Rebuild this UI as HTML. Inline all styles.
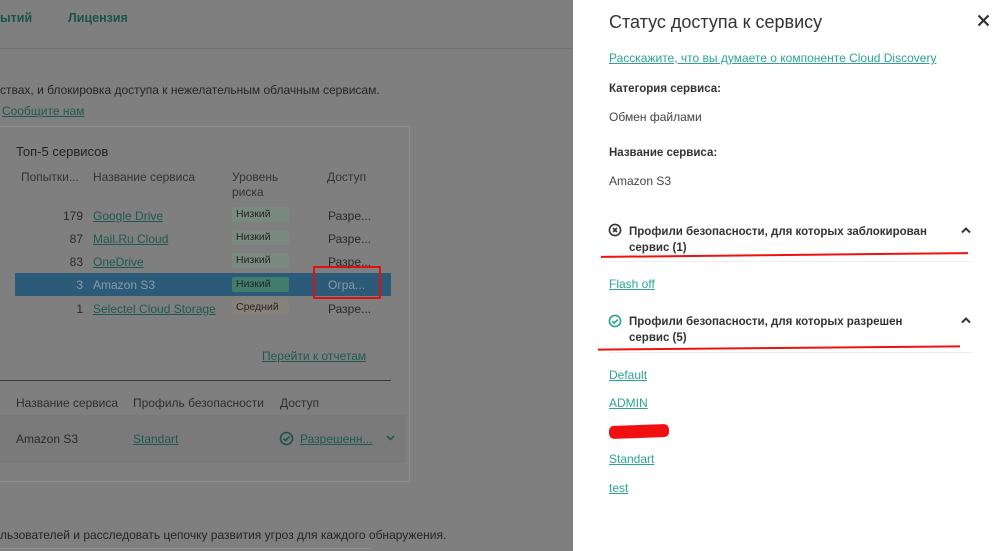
<!DOCTYPE html>
<html><head><meta charset="utf-8"><style>
*{margin:0;padding:0;box-sizing:border-box}
body{width:1000px;height:551px;overflow:hidden;position:relative;background:#7f7f7f;font-family:"Liberation Sans",sans-serif;font-size:12px;color:#2a2a2a}
.a{position:absolute;white-space:nowrap}
.dl{color:#1f5a50;text-decoration:underline}
.tag{position:absolute;width:57px;height:15px;font-size:10.5px;line-height:15px;padding:0 4px;background:#7a8a80;color:#262626;border-radius:2px}
#p{position:absolute;left:573px;top:0;width:427px;height:551px;background:#fff}
.pl{color:#2aa491;text-decoration:underline}
.b{font-weight:bold;color:#333}
</style></head><body>
<div class="a" style="left:0;top:11px;font-weight:bold;color:#1c5349;font-size:12.5px">ытий</div>
<div class="a" style="left:68px;top:11px;font-weight:bold;color:#1c5349;font-size:12.5px">Лицензия</div>
<div class="a" style="left:0;top:48px;width:573px;height:1px;background:#727272"></div>
<div class="a" style="left:0;top:83px;color:#252525">ствах, и блокировка доступа к нежелательным облачным сервисам.</div>
<div class="a dl" style="left:2px;top:104px">Сообщите нам</div>
<div class="a" style="left:-1px;top:126px;width:411px;height:356px;border:1px solid #8c8c8c;background:#7f7f7f"></div>
<div class="a" style="left:16px;top:144px;font-size:13px;color:#222">Топ-5 сервисов</div>
<div class="a" style="left:21px;top:170px;color:#333">Попытки...</div>
<div class="a" style="left:93px;top:170px;color:#333">Название сервиса</div>
<div class="a" style="left:232px;top:170px;color:#333;line-height:15px">Уровень<br>риска</div>
<div class="a" style="left:327px;top:170px;color:#333">Доступ</div>
<div class="a" style="left:15px;top:273px;width:376px;height:23px;background:#2b5b78"></div>
<div class="a" style="left:313px;top:266px;width:68px;height:33px;border:2px solid #e01010"></div>
<div class="a" style="left:40px;top:209px;width:43px;text-align:right">179</div><div class="a dl" style="left:93px;top:209px">Google Drive</div><div class="tag" style="left:232px;top:207px">Низкий</div><div class="a" style="left:328px;top:209px">Разре...</div>
<div class="a" style="left:40px;top:232px;width:43px;text-align:right">87</div><div class="a dl" style="left:93px;top:232px">Mail.Ru Cloud</div><div class="tag" style="left:232px;top:230px">Низкий</div><div class="a" style="left:328px;top:232px">Разре...</div>
<div class="a" style="left:40px;top:255px;width:43px;text-align:right">83</div><div class="a dl" style="left:93px;top:255px">OneDrive</div><div class="tag" style="left:232px;top:253px">Низкий</div><div class="a" style="left:328px;top:255px">Разре...</div>
<div class="a" style="left:40px;top:278px;width:43px;text-align:right;color:#8a9aa5">3</div><div class="a" style="left:93px;top:278px;color:#8a9aa5">Amazon S3</div><div class="tag" style="left:232px;top:277px;background:#417c6d">Низкий</div><div class="a" style="left:328px;top:278px;color:#8a9aa5">Огра...</div>
<div class="a" style="left:40px;top:302px;width:43px;text-align:right">1</div><div class="a dl" style="left:93px;top:302px">Selectel Cloud Storage</div><div class="tag" style="left:232px;top:300px;background:#86827a">Средний</div><div class="a" style="left:328px;top:302px">Разре...</div>
<div class="a dl" style="left:262px;top:349px">Перейти к отчетам</div>
<div class="a" style="left:0;top:380px;width:391px;height:1px;background:#3a3a3a"></div>
<div class="a" style="left:16px;top:396px;color:#2e2e2e">Название сервиса</div>
<div class="a" style="left:133px;top:396px;color:#2e2e2e">Профиль безопасности</div>
<div class="a" style="left:280px;top:396px;color:#2e2e2e">Доступ</div>
<div class="a" style="left:0;top:415px;width:405px;height:48px;background:#7a7a7a"></div>
<div class="a" style="left:16px;top:432px">Amazon S3</div>
<div class="a dl" style="left:133px;top:432px">Standart</div>
<svg class="a" style="left:279px;top:431px" width="15" height="15" viewBox="0 0 15 15"><circle cx="7.5" cy="7.5" r="6" fill="none" stroke="#1c5349" stroke-width="1.6"/><path d="M4.5 7.6l2 2 4-4" fill="none" stroke="#1c5349" stroke-width="1.6"/></svg>
<div class="a dl" style="left:300px;top:432px">Разрешенн...</div>
<svg class="a" style="left:386px;top:435px" width="9" height="6" viewBox="0 0 9 6"><path d="M1 1l3.5 3.5L8 1" fill="none" stroke="#1c5349" stroke-width="1.5"/></svg>
<div class="a" style="left:0;top:528px;color:#252525">льзователей и расследовать цепочку развития угроз для каждого обнаружения.</div>
<div class="a" style="left:0;top:548px;width:372px;height:1px;background:#8c8c8c"></div>
<div id="p">
<div class="a" style="left:36px;top:12px;font-size:18px;color:#333">Статус доступа к сервису</div>
<svg class="a" style="left:404px;top:14px" width="13" height="13" viewBox="0 0 13 13"><path d="M1.5 1.5l10 10M11.5 1.5l-10 10" stroke="#333" stroke-width="2.2"/></svg>
<div class="a pl" style="left:36px;top:51px">Расскажите, что вы думаете о компоненте Cloud Discovery</div>
<div class="a b" style="left:36px;top:83px;font-size:11.5px">Категория сервиса:</div>
<div class="a" style="left:36px;top:110px;color:#444">Обмен файлами</div>
<div class="a b" style="left:36px;top:147px;font-size:11.5px">Название сервиса:</div>
<div class="a" style="left:36px;top:174px;color:#444">Amazon S3</div>
<svg class="a" style="left:35px;top:223px" width="14" height="14" viewBox="0 0 14 14"><circle cx="7" cy="7" r="5.6" fill="none" stroke="#333" stroke-width="1.6"/><path d="M5 5l4 4M9 5l-4 4" stroke="#333" stroke-width="1.6"/></svg>
<div class="a b" style="left:56px;top:224px;font-size:11.5px;line-height:16px">Профили безопасности, для которых заблокирован<br>сервис (1)</div>
<svg class="a" style="left:388px;top:227px" width="10" height="7" viewBox="0 0 10 7"><path d="M1 5.5L5 1.5l4 4" fill="none" stroke="#333" stroke-width="2"/></svg>
<div class="a" style="left:28px;top:254px;width:367px;height:2px;background:#f01010;transform:rotate(-0.6deg)"></div>
<div class="a" style="left:36px;top:261px;width:364px;height:1px;background:#eee"></div>
<div class="a pl" style="left:36px;top:277px">Flash off </div>
<svg class="a" style="left:35px;top:314px" width="14" height="14" viewBox="0 0 14 14"><circle cx="7" cy="7" r="5.6" fill="none" stroke="#2aa491" stroke-width="1.6"/><path d="M4.3 7.2l1.9 1.9 3.6-3.6" fill="none" stroke="#2aa491" stroke-width="1.6"/></svg>
<div class="a b" style="left:56px;top:314px;font-size:11.5px;line-height:16px">Профили безопасности, для которых разрешен<br>сервис (5)</div>
<svg class="a" style="left:388px;top:317px" width="10" height="7" viewBox="0 0 10 7"><path d="M1 5.5L5 1.5l4 4" fill="none" stroke="#333" stroke-width="2"/></svg>
<div class="a" style="left:25px;top:347px;width:362px;height:2px;background:#f01010;transform:rotate(-0.5deg)"></div>
<div class="a" style="left:36px;top:352px;width:364px;height:1px;background:#eee"></div>
<div class="a pl" style="left:36px;top:368px">Default </div>
<div class="a pl" style="left:36px;top:396px">ADMIN </div>
<div class="a" style="left:36px;top:425px;width:60px;height:13px;background:#f01010;border-radius:5px;transform:rotate(-2deg)"></div>
<div class="a pl" style="left:36px;top:452px">Standart </div>
<div class="a pl" style="left:36px;top:481px">test </div>
</div>
</body></html>
